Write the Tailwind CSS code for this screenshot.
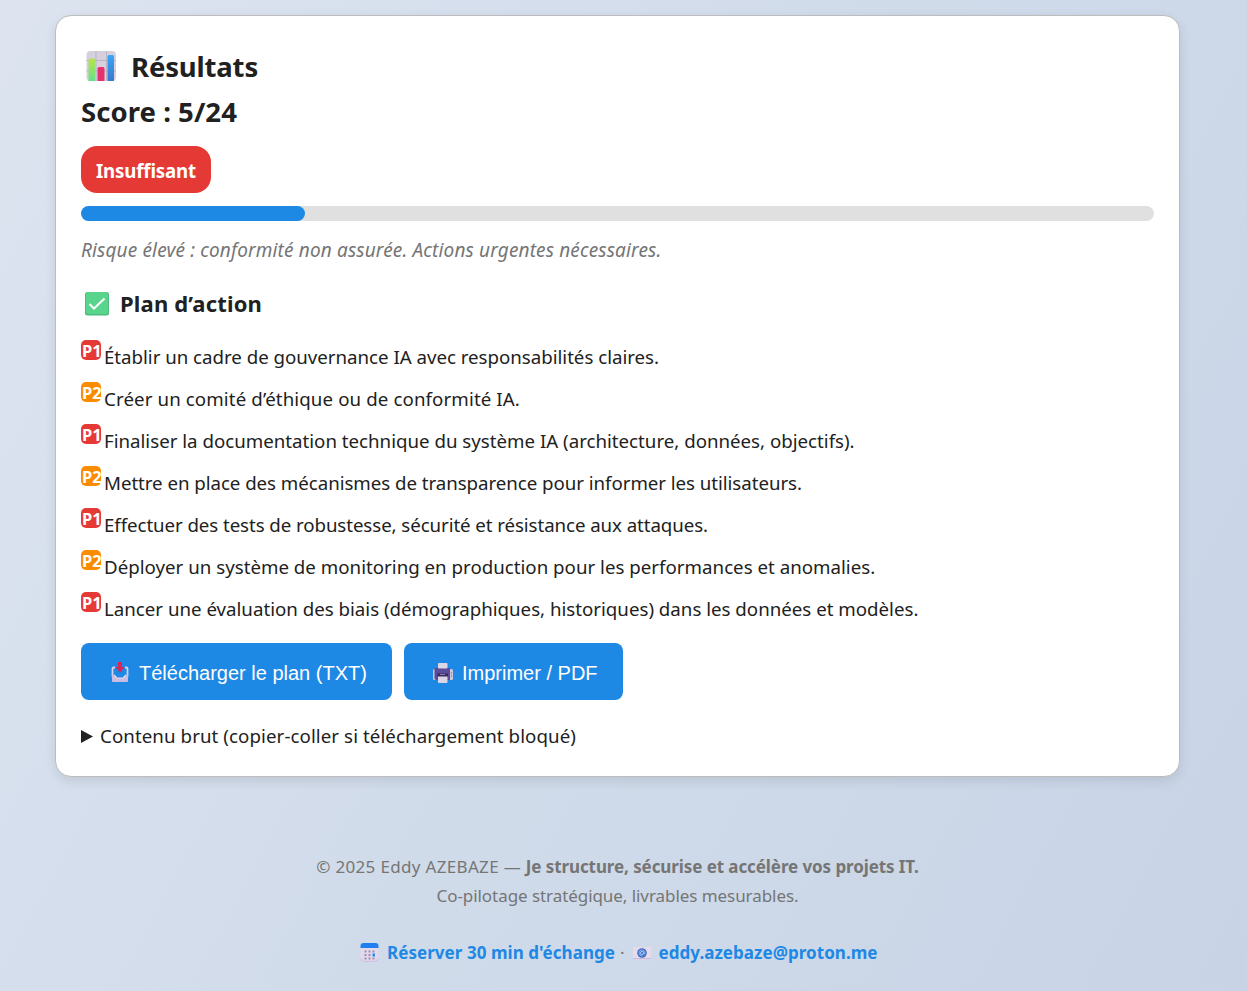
<!DOCTYPE html>
<html lang="fr">
<head>
<meta charset="utf-8">
<title>Résultats</title>
<script src="https://cdn.jsdelivr.net/npm/@tailwindcss/browser@4"></script>
</head>
<body class="min-h-[991px] overflow-hidden bg-[linear-gradient(118deg,#dde4f0,#d0dbea_50%,#c8d4e6)] font-['Noto_Sans',sans-serif] text-[18.7px] text-[#212121]">
<main class="ml-[55px] mt-[15px] h-[762px] w-[1125px] rounded-2xl border border-[#bdbdbd] bg-white px-[25px] pt-[30px] shadow-[0_4px_12px_rgba(0,0,0,0.1)]">
  <h1 class="flex h-[41px] items-center text-[27.5px] font-bold tracking-[-0.16px]">
    <svg class="ml-1 mr-[14px] h-8 w-8 -translate-y-px" viewBox="0 0 32 32"><defs><linearGradient id="g" x2="0" y2="1"><stop stop-color="#b7e34c"/><stop offset="1" stop-color="#66e08a"/></linearGradient><linearGradient id="b" x2="0" y2="1"><stop stop-color="#36a8f5"/><stop offset="1" stop-color="#3a78d0"/></linearGradient></defs><rect x="1.500" y="1" width="29.500" height="30" rx="4" fill="#d6d0de"/><path d="M1.500 10.500h29.500M1.500 21h29.500M11 1v30M21.500 1v30" stroke="#bbb3c6"/><path d="M3.500 31V10q0-1.500 1.500-1.500h3.500Q10 8.500 10 10v21z" fill="url(#g)"/><path d="M12.500 31V18.500q0-1.500 1.500-1.500h4q1.500 0 1.500 1.500V31z" fill="#e5326f"/><path d="M22.500 31V6.500Q22.500 5 24 5h3.500q1.500 0 1.500 1.500V31z" fill="url(#b)"/></svg>
    <span>Résultats</span>
  </h1>
  <h2 class="mt-[2px] flex h-[46px] items-center text-[27.5px] font-bold tracking-[0.05px]">Score : 5/24</h2>
  <div class="mt-[11px] flex h-[47px] w-[130px] items-center justify-center rounded-2xl bg-[#e53935] pt-[3px] font-bold tracking-[-0.16px] text-white">Insuffisant</div>
  <div class="mt-[13px] h-[15px] rounded-lg bg-[#e0e0e0]"><div class="h-full w-[224px] rounded-lg bg-[#1e88e5]"></div></div>
  <p class="mt-[15px] flex h-[28px] items-center text-[19px] italic tracking-[0.15px] text-[#757575]">Risque élevé : conformité non assurée. Actions urgentes nécessaires.</p>
  <h3 class="mt-[21px] flex h-[36px] items-center text-[22px] font-bold tracking-[0.16px]">
    <svg class="ml-1 mr-[11px] h-6 w-6 translate-y-px" viewBox="0 0 24 24"><rect width="24" height="23.500" rx="2.500" fill="#4bbd7c"/><rect x="1" width="22" height="22" rx="2" fill="#58d48c"/><path d="M4.500 12l4.500 4.500L19.500 6.500" fill="none" stroke="#fff" stroke-width="2"/></svg>
    <span>Plan d’action</span></h3>
  <ul class="mt-[15px]">
    <li class="flex h-[42px] gap-[3px]"><b class="mt-[4px] h-5 w-5 rounded-[5px] bg-[#e53935] pl-px text-[16.5px] leading-[22px] text-white">P1</b><span class="mt-[7px] leading-7 tracking-[-0.016px]">Établir un cadre de gouvernance IA avec responsabilités claires.</span></li>
    <li class="flex h-[42px] gap-[3px]"><b class="mt-[4px] h-5 w-5 rounded-[5px] bg-[#fb8c00] pl-px text-[16.5px] leading-[22px] text-white">P2</b><span class="mt-[7px] leading-7 tracking-[0.112px]">Créer un comité d’éthique ou de conformité IA.</span></li>
    <li class="flex h-[42px] gap-[3px]"><b class="mt-[4px] h-5 w-5 rounded-[5px] bg-[#e53935] pl-px text-[16.5px] leading-[22px] text-white">P1</b><span class="mt-[7px] leading-7">Finaliser la documentation technique du système IA (architecture, données, objectifs).</span></li>
    <li class="flex h-[42px] gap-[3px]"><b class="mt-[4px] h-5 w-5 rounded-[5px] bg-[#fb8c00] pl-px text-[16.5px] leading-[22px] text-white">P2</b><span class="mt-[7px] leading-7 tracking-[-0.042px]">Mettre en place des mécanismes de transparence pour informer les utilisateurs.</span></li>
    <li class="flex h-[42px] gap-[3px]"><b class="mt-[4px] h-5 w-5 rounded-[5px] bg-[#e53935] pl-px text-[16.5px] leading-[22px] text-white">P1</b><span class="mt-[7px] leading-7 tracking-[-0.075px]">Effectuer des tests de robustesse, sécurité et résistance aux attaques.</span></li>
    <li class="flex h-[42px] gap-[3px]"><b class="mt-[4px] h-5 w-5 rounded-[5px] bg-[#fb8c00] pl-px text-[16.5px] leading-[22px] text-white">P2</b><span class="mt-[7px] leading-7 tracking-[0.012px]">Déployer un système de monitoring en production pour les performances et anomalies.</span></li>
    <li class="flex h-[42px] gap-[3px]"><b class="mt-[4px] h-5 w-5 rounded-[5px] bg-[#e53935] pl-px text-[16.5px] leading-[22px] text-white">P1</b><span class="mt-[7px] leading-7">Lancer une évaluation des biais (démographiques, historiques) dans les données et modèles.</span></li>
  </ul>
  <div class="mt-[13px] flex gap-3 font-['Liberation_Sans',sans-serif] text-[20px] text-white">
    <button class="flex h-[57px] w-[311px] items-center rounded-lg bg-[#1e88e5] pl-[29px] pt-[3px]">
      <svg class="mr-[9px] h-5 w-5 -translate-y-px" viewBox="0 0 20 20"><path d="M5 5.500H3.800q-1.300 0-1.300 1.300v8M15 5.500h1.200q1.300 0 1.300 1.300v8" fill="none" stroke="#d9d0e6" stroke-width="1.800"/><path d="M2 13.500h3l2 2.500h6l2-2.500h3V19q0 1-1 1H3q-1 0-1-1z" fill="#cbbce3"/><path d="M4 13l2.800 3h6.400L16 13" fill="none" stroke="#e4ddec" stroke-width="1.200"/><path d="M8 0h4v5h2.500L10 10.500 5.500 5H8z" fill="#dc2456"/></svg>
      <span>Télécharger le plan (TXT)</span></button>
    <button class="flex h-[57px] w-[219px] items-center rounded-lg bg-[#1e88e5] pl-[29px] pt-[3px]">
      <svg class="mr-[9px] h-5 w-5" viewBox="0 0 20 20"><rect y="6" width="20" height="11" rx="1.500" fill="#cfc6dc"/><path d="M1.500 5H17v12H3.500q-2 0-2-2z" fill="#5b4b9b"/><rect x="5" width="9.500" height="5.500" rx="1" fill="#dcd5e5"/><path d="M4.500 10.500h10.500V14H4.500z" fill="#372c5e"/><path d="M5 13.500h9.500V19q0 1-1 1H6q-1 0-1-1z" fill="#dcd5e5"/><path d="M7 11.500h5" stroke="#8c7bb8"/><path d="M18 10h1M18 13h1" stroke="#e55a83" stroke-width="1.500"/></svg>
      <span>Imprimer / PDF</span></button>
  </div>
  <div class="mt-[22px] flex h-7 items-center tracking-[0.083px]">
    <svg class="mr-[7px] h-[13px] w-3" viewBox="0 0 12 13"><path d="M0 0l12 6.500L0 13z" fill="#212121"/></svg>
    <span>Contenu brut (copier-coller si téléchargement bloqué)</span></div>
</main>
<footer class="mt-[75px] w-[1235px] text-center text-[17px] leading-[29px] text-[#757575]">
  <p><span class="tracking-[0.33px]">© 2025 Eddy AZEBAZE — </span><b class="tracking-[-0.089px]">Je structure, sécurise et accélère vos projets IT.</b></p>
  <p class="tracking-[-0.062px]">Co-pilotage stratégique, livrables mesurables.</p>
  <div class="ml-[360px] mt-7 flex items-center font-bold text-[#1e88e5]">
    <svg class="mr-[8px] h-[19px] w-[19px]" viewBox="0 0 19 19"><rect x=".5" y="1" width="18" height="17.500" rx="3" fill="#e3d8ee"/><path d="M1 15.500q0 2.800 2.500 2.800h12q2.500 0 2.500-2.800" fill="none" stroke="#d3b9e4"/><path d="M.5 5V3q0-3 3-3h12q3 0 3 3v2z" fill="#2180ef"/><path d="M4.500 7.500h2v2h-2zM8.500 7.500h2v2h-2zM12.500 7.500h2v2h-2zM4.500 11h2v2h-2zM8.500 11h2v2h-2zM4.500 14.500h2v2h-2zM8.500 14.500h2v2h-2zM12.500 14.500h2v2h-2z" fill="#9a90a8"/><rect x="12.500" y="10.500" width="2.500" height="3" fill="#258cf0"/></svg>
    <span class="tracking-[0.048px]">Réserver 30 min d'échange</span>
    <span class="ml-[5px] font-normal text-[#757575]">·</span>
    <svg class="ml-[8px] mr-[8px] h-[14px] w-[18px]" viewBox="0 0 18 14"><rect y="1" width="18" height="12" rx=".5" fill="#e5dbea"/><path d="M0 12.500h18" stroke="#d4b6df"/><circle cx="9" cy="7" r="4.800" fill="#3e70c8"/><circle cx="9" cy="7" r="1.600" fill="none" stroke="#a9c8f5"/><path d="M10.600 5.500v2q.3 1.200 1.300.4.700-3.300-2.200-4Q6 3.500 6 7q.3 3 3.500 3" fill="none" stroke="#a9c8f5" stroke-width=".7"/></svg>
    <span class="tracking-[0.043px]">eddy.azebaze@proton.me</span>
  </div>
</footer>
</body>
</html>
